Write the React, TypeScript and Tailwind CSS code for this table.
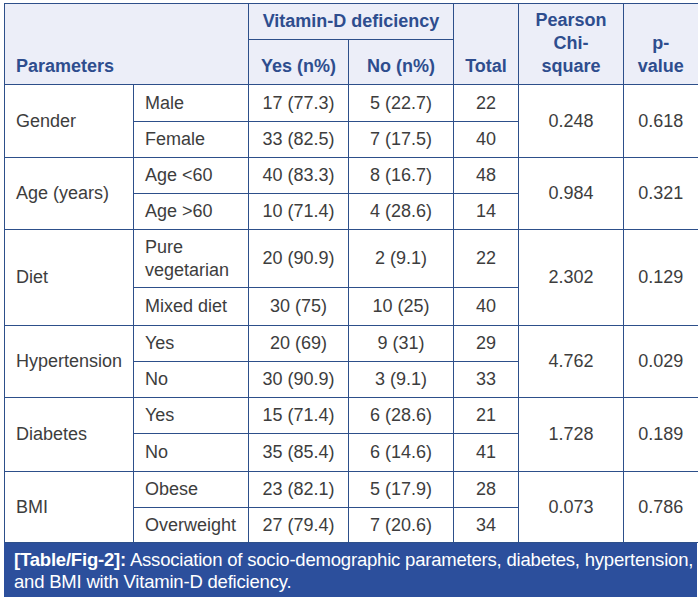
import React from 'react'

type Row = {
  group?: string
  span?: number
  label: React.ReactNode
  yes: string
  no: string
  total: string
  chi?: string
  p?: string
  h: string
}

const rows: Row[] = [
  { group: 'Gender', span: 2, label: 'Male', yes: '17 (77.3)', no: '5 (22.7)', total: '22', chi: '0.248', p: '0.618', h: 'h-[37px]' },
  { label: 'Female', yes: '33 (82.5)', no: '7 (17.5)', total: '40', h: 'h-[36px]' },
  { group: 'Age (years)', span: 2, label: 'Age <60', yes: '40 (83.3)', no: '8 (16.7)', total: '48', chi: '0.984', p: '0.321', h: 'h-[36px]' },
  { label: 'Age >60', yes: '10 (71.4)', no: '4 (28.6)', total: '14', h: 'h-[36px]' },
  { group: 'Diet', span: 2, label: 'Pure vegetarian', yes: '20 (90.9)', no: '2 (9.1)', total: '22', chi: '2.302', p: '0.129', h: 'h-[58px]' },
  { label: 'Mixed diet', yes: '30 (75)', no: '10 (25)', total: '40', h: 'h-[38px]' },
  { group: 'Hypertension', span: 2, label: 'Yes', yes: '20 (69)', no: '9 (31)', total: '29', chi: '4.762', p: '0.029', h: 'h-[36px]' },
  { label: 'No', yes: '30 (90.9)', no: '3 (9.1)', total: '33', h: 'h-[36px]' },
  { group: 'Diabetes', span: 2, label: 'Yes', yes: '15 (71.4)', no: '6 (28.6)', total: '21', chi: '1.728', p: '0.189', h: 'h-[36px]' },
  { label: 'No', yes: '35 (85.4)', no: '6 (14.6)', total: '41', h: 'h-[38px]' },
  { group: 'BMI', span: 2, label: 'Obese', yes: '23 (82.1)', no: '5 (17.9)', total: '28', chi: '0.073', p: '0.786', h: 'h-[36px]' },
  { label: 'Overweight', yes: '27 (79.4)', no: '7 (20.6)', total: '34', h: 'h-[35px]' },
]

const cell = 'border border-[#2d4f8a] p-0'

export default function App() {
  return (
    <div className="w-[700px] h-[603px] bg-white pt-[3px] pl-[4px] font-['Liberation_Sans',Arial,sans-serif]">
      <div className="w-[693px]">
        <table className="w-[693px] table-fixed border-collapse text-[18px] leading-[23px]">
          <colgroup>
            <col className="w-[129px]" />
            <col className="w-[115px]" />
            <col className="w-[100px]" />
            <col className="w-[105px]" />
            <col className="w-[65px]" />
            <col className="w-[105px]" />
            <col className="w-[74px]" />
          </colgroup>
          <thead className="bg-[#eceef8] text-[#2e4d8e] font-bold">
            <tr className="h-[36px]">
              <th colSpan={2} rowSpan={2} className={`${cell} align-bottom text-left pl-[11px] pb-[6px]`}>
                Parameters
              </th>
              <th colSpan={2} className={`${cell} align-middle text-center`}>
                Vitamin-D deficiency
              </th>
              <th rowSpan={2} className={`${cell} align-bottom text-center pb-[6px]`}>
                Total
              </th>
              <th rowSpan={2} className={`${cell} align-bottom text-center pb-[6px]`}>
                Pearson
                <br />
                Chi-
                <br />
                square
              </th>
              <th rowSpan={2} className={`${cell} border-r-0 align-bottom text-center pb-[6px]`}>
                p-
                <br />
                value
              </th>
            </tr>
            <tr className="h-[45px]">
              <th className={`${cell} align-bottom text-center pb-[6px]`}>Yes (n%)</th>
              <th className={`${cell} align-bottom text-center pb-[6px]`}>No (n%)</th>
            </tr>
          </thead>
          <tbody className="text-[#3d3d3d]">
            {rows.map((r, i) => (
              <tr key={i} className={r.h}>
                {r.group && (
                  <td rowSpan={r.span} className={`${cell} pl-[11px] align-middle`}>
                    {r.group}
                  </td>
                )}
                <td className={`${cell} pl-[11px] pr-[6px] align-middle`}>{r.label}</td>
                <td className={`${cell} text-center align-middle`}>{r.yes}</td>
                <td className={`${cell} text-center align-middle`}>{r.no}</td>
                <td className={`${cell} text-center align-middle`}>{r.total}</td>
                {r.chi && (
                  <td rowSpan={r.span} className={`${cell} text-center align-middle`}>
                    {r.chi}
                  </td>
                )}
                {r.p && (
                  <td rowSpan={r.span} className={`${cell} border-r-0 text-center align-middle`}>
                    {r.p}
                  </td>
                )}
              </tr>
            ))}
          </tbody>
        </table>
        {/* caption */}
        <div className="bg-[#2c4f9c] text-white text-[18.5px] leading-[22px] pl-[10px] pr-[2px] pt-[6px] h-[54px] tracking-[-0.2px]">
          <p className="whitespace-nowrap">
            <span className="font-bold">[Table/Fig-2]:</span> Association of socio-demographic parameters, diabetes, hypertension,
          </p>
          <p className="whitespace-nowrap">and BMI with Vitamin-D deficiency.</p>
        </div>
      </div>
    </div>
  )
}
